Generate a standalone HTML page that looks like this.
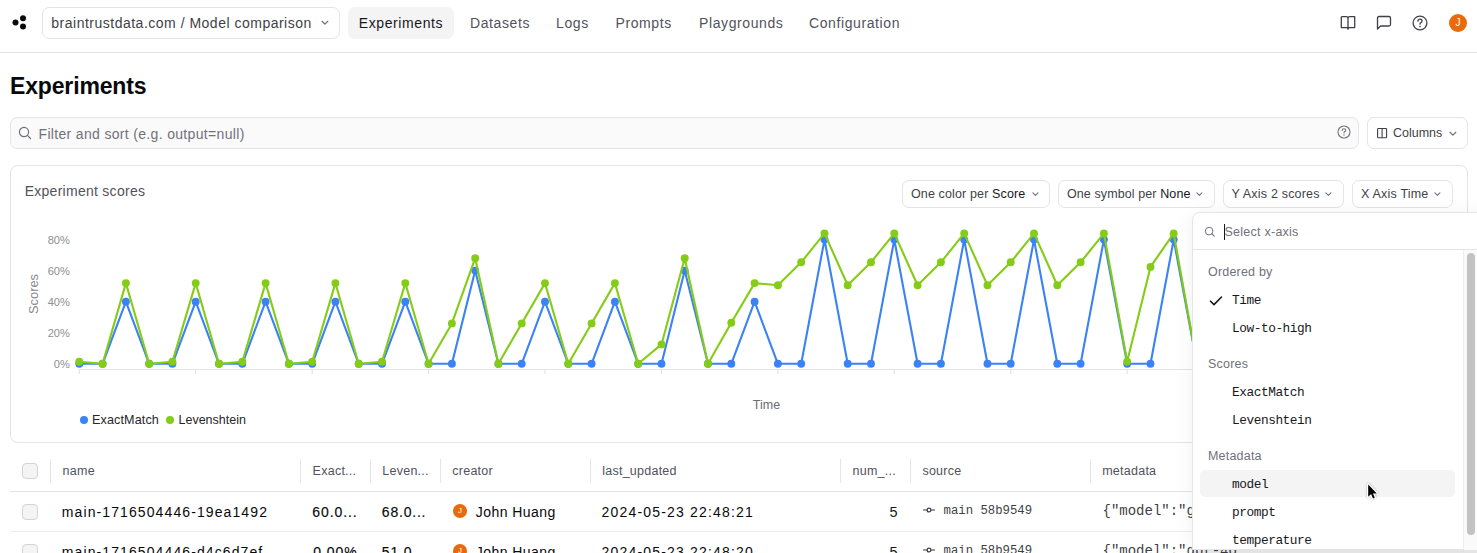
<!DOCTYPE html>
<html><head><meta charset="utf-8">
<style>
*{box-sizing:border-box;margin:0;padding:0}
html,body{width:1477px;height:553px;overflow:hidden;background:#fff}
body{font-family:"Liberation Sans",sans-serif;color:#18181b;position:relative}
.a{position:absolute;white-space:nowrap}
.hdr{position:absolute;left:0;top:0;width:1477px;height:53px;border-bottom:1px solid #e4e4e7}
.sel{position:absolute;left:42px;top:7px;width:298px;height:32px;border:1px solid #e4e4e7;border-radius:7px}
.tab{position:absolute;top:7px;height:32px;line-height:32px;font-size:14px;color:#52525b;letter-spacing:0.6px}
.tab.on{background:#f4f4f5;border-radius:7px;color:#18181b}
.ico{position:absolute}
.btn{position:absolute;border:1px solid #e4e4e7;border-radius:7px;background:#fff}
.chev{position:absolute}
.mono{font-family:"Liberation Mono",monospace}
</style></head><body>

<!-- header -->
<div class="hdr"></div>
<svg class="ico" style="left:10px;top:13px" width="18" height="18" viewBox="0 0 18 18">
  <circle cx="5.5" cy="9.5" r="3" fill="#0a0a0a"/>
  <circle cx="13" cy="5.2" r="3" fill="#0a0a0a"/>
  <circle cx="13" cy="13.6" r="3" fill="#0a0a0a"/>
</svg>
<div class="sel"></div>
<div class="a" style="left:51.3px;top:13px;font-size:14px;line-height:20px;color:#3f3f46;letter-spacing:0.5px">braintrustdata.com / Model comparison</div>
<svg class="chev" style="left:321px;top:20px" width="8" height="5" viewBox="0 0 8 5"><path d="M1 1.3 L3.9 4.1 L6.8 1.3" fill="none" stroke="#71717a" stroke-width="1.25" stroke-linecap="round" stroke-linejoin="round"/></svg>

<div class="tab on" style="left:348px;width:106px;text-align:center">Experiments</div>
<div class="tab" style="left:470px">Datasets</div>
<div class="tab" style="left:556px">Logs</div>
<div class="tab" style="left:615.5px">Prompts</div>
<div class="tab" style="left:699px">Playgrounds</div>
<div class="tab" style="left:809px">Configuration</div>

<!-- right icons -->
<svg class="ico" style="left:1340px;top:15px" width="16" height="16" viewBox="0 0 16 16">
  <path d="M1.3 1.7 H6.3 Q8 1.7 8 3.4 V14.6 M8 3.4 Q8 1.7 9.7 1.7 H14.7 V12.6 H9.6 Q8 12.6 8 14.2 Q8 12.6 6.4 12.6 H1.3 V1.7" fill="none" stroke="#3f3f46" stroke-width="1.3" stroke-linejoin="round"/>
</svg>
<svg class="ico" style="left:1376px;top:15px" width="16" height="16" viewBox="0 0 16 16">
  <path d="M1.5 14 V3 Q1.5 1.5 3 1.5 H13 Q14.5 1.5 14.5 3 V9.5 Q14.5 11 13 11 H4.5 Z" fill="none" stroke="#3f3f46" stroke-width="1.3" stroke-linejoin="round"/>
</svg>
<svg class="ico" style="left:1412px;top:15px" width="16" height="16" viewBox="0 0 16 16">
  <circle cx="8" cy="8" r="6.9" fill="none" stroke="#3f3f46" stroke-width="1.3"/>
  <path d="M5.9 6.2 Q6 4.2 8 4.2 Q10 4.2 10 6 Q10 7.2 8.6 7.8 Q8 8.1 8 9.2" fill="none" stroke="#3f3f46" stroke-width="1.3" stroke-linecap="round"/>
  <circle cx="8" cy="11.6" r="0.8" fill="#3f3f46"/>
</svg>
<div class="a" style="left:1449px;top:14px;width:18px;height:18px;border-radius:50%;background:#ea6a0a;color:#fff;font-size:10px;line-height:18px;text-align:center">J</div>

<!-- title -->
<div class="a" style="left:10px;top:72px;font-size:23px;line-height:28px;font-weight:700;color:#09090b;letter-spacing:-0.15px">Experiments</div>

<!-- search -->
<div class="btn" style="left:10px;top:117px;width:1349px;height:32px;background:#fafafa;border-color:#e4e4e7"></div>
<svg class="ico" style="left:18px;top:126px" width="14" height="14" viewBox="0 0 14 14">
  <circle cx="6" cy="6" r="4.6" fill="none" stroke="#71717a" stroke-width="1.2"/>
  <path d="M9.4 9.4 L12.5 12.5" stroke="#71717a" stroke-width="1.2" stroke-linecap="round"/>
</svg>
<div class="a" style="left:38.5px;top:124px;font-size:14px;line-height:20px;color:#71717a;letter-spacing:0.33px">Filter and sort (e.g. output=null)</div>
<svg class="ico" style="left:1337px;top:125px" width="14" height="14" viewBox="0 0 14 14">
  <circle cx="7" cy="7" r="6" fill="none" stroke="#71717a" stroke-width="1.1"/>
  <path d="M5.2 5.5 Q5.3 3.8 7 3.8 Q8.7 3.8 8.7 5.3 Q8.7 6.3 7.5 6.8 Q7 7.1 7 8" fill="none" stroke="#71717a" stroke-width="1.1" stroke-linecap="round"/>
  <circle cx="7" cy="10" r="0.7" fill="#71717a"/>
</svg>

<!-- columns button -->
<div class="btn" style="left:1367px;top:117px;width:101px;height:32px"></div>
<svg class="ico" style="left:1376px;top:127px" width="12" height="12" viewBox="0 0 12 12">
  <rect x="1.6" y="1.5" width="9" height="9.3" rx="0.8" fill="none" stroke="#3f3f46" stroke-width="1.1"/>
  <path d="M6.1 1.5 V10.8" stroke="#3f3f46" stroke-width="1.1"/>
</svg>
<div class="a" style="left:1393px;top:123px;font-size:12.5px;line-height:20px;color:#3f3f46">Columns</div>
<svg class="chev" style="left:1449px;top:131px" width="8" height="5" viewBox="0 0 8 5"><path d="M1 1.3 L3.9 4.1 L6.8 1.3" fill="none" stroke="#71717a" stroke-width="1.25" stroke-linecap="round" stroke-linejoin="round"/></svg>

<!-- card -->
<div class="a" style="left:10px;top:165px;width:1458px;height:278px;border:1px solid #e4e4e7;border-radius:8px"></div>
<div class="a" style="left:24.7px;top:181px;font-size:14px;line-height:20px;color:#52525b;letter-spacing:0.27px">Experiment scores</div>

<div class="btn" style="left:902px;top:180px;width:148px;height:28px"></div>
<div class="a" style="left:911px;top:186px;font-size:12.5px;line-height:16px;color:#3f3f46;letter-spacing:0.13px">One color per <span style="color:#18181b">Score</span></div>
<svg class="chev" style="left:1032px;top:190.6px" width="7" height="6" viewBox="0 0 8 5"><path d="M1 1.3 L3.9 4.1 L6.8 1.3" fill="none" stroke="#71717a" stroke-width="1.25" stroke-linecap="round" stroke-linejoin="round"/></svg>

<div class="btn" style="left:1058px;top:180px;width:157px;height:28px"></div>
<div class="a" style="left:1067px;top:186px;font-size:12.5px;line-height:16px;color:#3f3f46;letter-spacing:0.1px">One symbol per <span style="color:#18181b">None</span></div>
<svg class="chev" style="left:1196px;top:190.6px" width="7" height="6" viewBox="0 0 8 5"><path d="M1 1.3 L3.9 4.1 L6.8 1.3" fill="none" stroke="#71717a" stroke-width="1.25" stroke-linecap="round" stroke-linejoin="round"/></svg>

<div class="btn" style="left:1223px;top:180px;width:121px;height:28px"></div>
<div class="a" style="left:1231.5px;top:186px;font-size:12.5px;line-height:16px;color:#3f3f46;letter-spacing:0.2px">Y Axis 2 scores</div>
<svg class="chev" style="left:1325px;top:190.6px" width="7" height="6" viewBox="0 0 8 5"><path d="M1 1.3 L3.9 4.1 L6.8 1.3" fill="none" stroke="#71717a" stroke-width="1.25" stroke-linecap="round" stroke-linejoin="round"/></svg>

<div class="btn" style="left:1352px;top:180px;width:101px;height:28px"></div>
<div class="a" style="left:1361px;top:186px;font-size:12.5px;line-height:16px;color:#3f3f46;letter-spacing:0.2px">X Axis Time</div>
<svg class="chev" style="left:1434px;top:190.6px" width="7" height="6" viewBox="0 0 8 5"><path d="M1 1.3 L3.9 4.1 L6.8 1.3" fill="none" stroke="#71717a" stroke-width="1.25" stroke-linecap="round" stroke-linejoin="round"/></svg>

<!-- CHART -->
<svg id="chart" class="a" style="left:0;top:0" width="1477" height="553" viewBox="0 0 1477 553">
<g id="chartg">
<text x="69.9" y="367.8" text-anchor="end" font-size="11.1" fill="#8e8e93" font-family="Liberation Sans">0%</text>
<text x="69.9" y="336.8" text-anchor="end" font-size="11.1" fill="#8e8e93" font-family="Liberation Sans">20%</text>
<text x="69.9" y="305.7" text-anchor="end" font-size="11.1" fill="#8e8e93" font-family="Liberation Sans">40%</text>
<text x="69.9" y="274.6" text-anchor="end" font-size="11.1" fill="#8e8e93" font-family="Liberation Sans">60%</text>
<text x="69.9" y="243.6" text-anchor="end" font-size="11.1" fill="#8e8e93" font-family="Liberation Sans">80%</text>
<text transform="translate(37.9,294) rotate(-90)" text-anchor="middle" font-size="12.9" fill="#8a8a8f" font-family="Liberation Sans">Scores</text>
<path d="M79.3 369.5 H1200" stroke="#e4e4e7" stroke-width="1.2" fill="none"/>
<path d="M79.3 369.5 V374" stroke="#e4e4e7" stroke-width="1.2"/>
<path d="M195.7 369.5 V374" stroke="#e4e4e7" stroke-width="1.2"/>
<path d="M312.2 369.5 V374" stroke="#e4e4e7" stroke-width="1.2"/>
<path d="M428.6 369.5 V374" stroke="#e4e4e7" stroke-width="1.2"/>
<path d="M545.0 369.5 V374" stroke="#e4e4e7" stroke-width="1.2"/>
<path d="M661.5 369.5 V374" stroke="#e4e4e7" stroke-width="1.2"/>
<path d="M777.9 369.5 V374" stroke="#e4e4e7" stroke-width="1.2"/>
<path d="M894.3 369.5 V374" stroke="#e4e4e7" stroke-width="1.2"/>
<path d="M1010.7 369.5 V374" stroke="#e4e4e7" stroke-width="1.2"/>
<path d="M1127.2 369.5 V374" stroke="#e4e4e7" stroke-width="1.2"/>
<path d="M1243.6 369.5 V374" stroke="#e4e4e7" stroke-width="1.2"/>
<polyline points="79.3,363.8 102.6,363.8 125.9,301.7 149.2,363.8 172.4,363.8 195.7,301.7 219.0,363.8 242.3,363.8 265.6,301.7 288.9,363.8 312.2,363.8 335.4,301.7 358.7,363.8 382.0,363.8 405.3,301.7 428.6,363.8 451.9,363.8 475.2,270.6 498.4,363.8 521.7,363.8 545.0,301.7 568.3,363.8 591.6,363.8 614.9,301.7 638.2,363.8 661.5,363.8 684.7,270.6 708.0,363.8 731.3,363.8 754.6,301.7 777.9,363.8 801.2,363.8 824.5,239.6 847.7,363.8 871.0,363.8 894.3,239.6 917.6,363.8 940.9,363.8 964.2,239.6 987.5,363.8 1010.7,363.8 1034.0,239.6 1057.3,363.8 1080.6,363.8 1103.9,239.6 1127.2,363.8 1150.5,363.8 1173.7,239.6 1197.0,363.8 1220.3,363.8 1243.6,301.7" fill="none" stroke="#3b82f6" stroke-width="2.1" stroke-linejoin="round"/>
<circle cx="79.3" cy="363.8" r="3.95" fill="#3b82f6"/><circle cx="102.6" cy="363.8" r="3.95" fill="#3b82f6"/><circle cx="125.9" cy="301.7" r="3.95" fill="#3b82f6"/><circle cx="149.2" cy="363.8" r="3.95" fill="#3b82f6"/><circle cx="172.4" cy="363.8" r="3.95" fill="#3b82f6"/><circle cx="195.7" cy="301.7" r="3.95" fill="#3b82f6"/><circle cx="219.0" cy="363.8" r="3.95" fill="#3b82f6"/><circle cx="242.3" cy="363.8" r="3.95" fill="#3b82f6"/><circle cx="265.6" cy="301.7" r="3.95" fill="#3b82f6"/><circle cx="288.9" cy="363.8" r="3.95" fill="#3b82f6"/><circle cx="312.2" cy="363.8" r="3.95" fill="#3b82f6"/><circle cx="335.4" cy="301.7" r="3.95" fill="#3b82f6"/><circle cx="358.7" cy="363.8" r="3.95" fill="#3b82f6"/><circle cx="382.0" cy="363.8" r="3.95" fill="#3b82f6"/><circle cx="405.3" cy="301.7" r="3.95" fill="#3b82f6"/><circle cx="428.6" cy="363.8" r="3.95" fill="#3b82f6"/><circle cx="451.9" cy="363.8" r="3.95" fill="#3b82f6"/><circle cx="475.2" cy="270.6" r="3.95" fill="#3b82f6"/><circle cx="498.4" cy="363.8" r="3.95" fill="#3b82f6"/><circle cx="521.7" cy="363.8" r="3.95" fill="#3b82f6"/><circle cx="545.0" cy="301.7" r="3.95" fill="#3b82f6"/><circle cx="568.3" cy="363.8" r="3.95" fill="#3b82f6"/><circle cx="591.6" cy="363.8" r="3.95" fill="#3b82f6"/><circle cx="614.9" cy="301.7" r="3.95" fill="#3b82f6"/><circle cx="638.2" cy="363.8" r="3.95" fill="#3b82f6"/><circle cx="661.5" cy="363.8" r="3.95" fill="#3b82f6"/><circle cx="684.7" cy="270.6" r="3.95" fill="#3b82f6"/><circle cx="708.0" cy="363.8" r="3.95" fill="#3b82f6"/><circle cx="731.3" cy="363.8" r="3.95" fill="#3b82f6"/><circle cx="754.6" cy="301.7" r="3.95" fill="#3b82f6"/><circle cx="777.9" cy="363.8" r="3.95" fill="#3b82f6"/><circle cx="801.2" cy="363.8" r="3.95" fill="#3b82f6"/><circle cx="824.5" cy="239.6" r="3.95" fill="#3b82f6"/><circle cx="847.7" cy="363.8" r="3.95" fill="#3b82f6"/><circle cx="871.0" cy="363.8" r="3.95" fill="#3b82f6"/><circle cx="894.3" cy="239.6" r="3.95" fill="#3b82f6"/><circle cx="917.6" cy="363.8" r="3.95" fill="#3b82f6"/><circle cx="940.9" cy="363.8" r="3.95" fill="#3b82f6"/><circle cx="964.2" cy="239.6" r="3.95" fill="#3b82f6"/><circle cx="987.5" cy="363.8" r="3.95" fill="#3b82f6"/><circle cx="1010.7" cy="363.8" r="3.95" fill="#3b82f6"/><circle cx="1034.0" cy="239.6" r="3.95" fill="#3b82f6"/><circle cx="1057.3" cy="363.8" r="3.95" fill="#3b82f6"/><circle cx="1080.6" cy="363.8" r="3.95" fill="#3b82f6"/><circle cx="1103.9" cy="239.6" r="3.95" fill="#3b82f6"/><circle cx="1127.2" cy="363.8" r="3.95" fill="#3b82f6"/><circle cx="1150.5" cy="363.8" r="3.95" fill="#3b82f6"/><circle cx="1173.7" cy="239.6" r="3.95" fill="#3b82f6"/><circle cx="1197.0" cy="363.8" r="3.95" fill="#3b82f6"/><circle cx="1220.3" cy="363.8" r="3.95" fill="#3b82f6"/><circle cx="1243.6" cy="301.7" r="3.95" fill="#3b82f6"/>
<polyline points="79.3,361.8 102.6,363.8 125.9,283.1 149.2,363.8 172.4,361.8 195.7,283.1 219.0,363.8 242.3,361.8 265.6,283.1 288.9,363.8 312.2,361.8 335.4,283.1 358.7,363.8 382.0,361.8 405.3,283.1 428.6,363.8 451.9,323.4 475.2,258.2 498.4,363.8 521.7,323.4 545.0,283.1 568.3,363.8 591.6,323.4 614.9,283.1 638.2,363.8 661.5,344.4 684.7,258.2 708.0,363.8 731.3,322.7 754.6,283.1 777.9,285.2 801.2,262.3 824.5,233.4 847.7,285.2 871.0,262.3 894.3,233.4 917.6,285.2 940.9,262.3 964.2,233.4 987.5,285.2 1010.7,262.3 1034.0,233.4 1057.3,285.2 1080.6,262.3 1103.9,233.4 1127.2,361.6 1150.5,266.9 1173.7,233.4 1197.0,363.8 1220.3,323.4 1243.6,283.1" fill="none" stroke="#84cc16" stroke-width="2.1" stroke-linejoin="round"/>
<circle cx="79.3" cy="361.8" r="3.95" fill="#84cc16"/><circle cx="102.6" cy="363.8" r="3.95" fill="#84cc16"/><circle cx="125.9" cy="283.1" r="3.95" fill="#84cc16"/><circle cx="149.2" cy="363.8" r="3.95" fill="#84cc16"/><circle cx="172.4" cy="361.8" r="3.95" fill="#84cc16"/><circle cx="195.7" cy="283.1" r="3.95" fill="#84cc16"/><circle cx="219.0" cy="363.8" r="3.95" fill="#84cc16"/><circle cx="242.3" cy="361.8" r="3.95" fill="#84cc16"/><circle cx="265.6" cy="283.1" r="3.95" fill="#84cc16"/><circle cx="288.9" cy="363.8" r="3.95" fill="#84cc16"/><circle cx="312.2" cy="361.8" r="3.95" fill="#84cc16"/><circle cx="335.4" cy="283.1" r="3.95" fill="#84cc16"/><circle cx="358.7" cy="363.8" r="3.95" fill="#84cc16"/><circle cx="382.0" cy="361.8" r="3.95" fill="#84cc16"/><circle cx="405.3" cy="283.1" r="3.95" fill="#84cc16"/><circle cx="428.6" cy="363.8" r="3.95" fill="#84cc16"/><circle cx="451.9" cy="323.4" r="3.95" fill="#84cc16"/><circle cx="475.2" cy="258.2" r="3.95" fill="#84cc16"/><circle cx="498.4" cy="363.8" r="3.95" fill="#84cc16"/><circle cx="521.7" cy="323.4" r="3.95" fill="#84cc16"/><circle cx="545.0" cy="283.1" r="3.95" fill="#84cc16"/><circle cx="568.3" cy="363.8" r="3.95" fill="#84cc16"/><circle cx="591.6" cy="323.4" r="3.95" fill="#84cc16"/><circle cx="614.9" cy="283.1" r="3.95" fill="#84cc16"/><circle cx="638.2" cy="363.8" r="3.95" fill="#84cc16"/><circle cx="661.5" cy="344.4" r="3.95" fill="#84cc16"/><circle cx="684.7" cy="258.2" r="3.95" fill="#84cc16"/><circle cx="708.0" cy="363.8" r="3.95" fill="#84cc16"/><circle cx="731.3" cy="322.7" r="3.95" fill="#84cc16"/><circle cx="754.6" cy="283.1" r="3.95" fill="#84cc16"/><circle cx="777.9" cy="285.2" r="3.95" fill="#84cc16"/><circle cx="801.2" cy="262.3" r="3.95" fill="#84cc16"/><circle cx="824.5" cy="233.4" r="3.95" fill="#84cc16"/><circle cx="847.7" cy="285.2" r="3.95" fill="#84cc16"/><circle cx="871.0" cy="262.3" r="3.95" fill="#84cc16"/><circle cx="894.3" cy="233.4" r="3.95" fill="#84cc16"/><circle cx="917.6" cy="285.2" r="3.95" fill="#84cc16"/><circle cx="940.9" cy="262.3" r="3.95" fill="#84cc16"/><circle cx="964.2" cy="233.4" r="3.95" fill="#84cc16"/><circle cx="987.5" cy="285.2" r="3.95" fill="#84cc16"/><circle cx="1010.7" cy="262.3" r="3.95" fill="#84cc16"/><circle cx="1034.0" cy="233.4" r="3.95" fill="#84cc16"/><circle cx="1057.3" cy="285.2" r="3.95" fill="#84cc16"/><circle cx="1080.6" cy="262.3" r="3.95" fill="#84cc16"/><circle cx="1103.9" cy="233.4" r="3.95" fill="#84cc16"/><circle cx="1127.2" cy="361.6" r="3.95" fill="#84cc16"/><circle cx="1150.5" cy="266.9" r="3.95" fill="#84cc16"/><circle cx="1173.7" cy="233.4" r="3.95" fill="#84cc16"/><circle cx="1197.0" cy="363.8" r="3.95" fill="#84cc16"/><circle cx="1220.3" cy="323.4" r="3.95" fill="#84cc16"/><circle cx="1243.6" cy="283.1" r="3.95" fill="#84cc16"/>
<text x="766.5" y="408.8" text-anchor="middle" font-size="12.5" fill="#6b6b70" font-family="Liberation Sans">Time</text>
<circle cx="84" cy="420" r="4" fill="#3b82f6"/><text x="92" y="424" font-size="12.6" letter-spacing="0.12" fill="#27272a" font-family="Liberation Sans">ExactMatch</text>
<circle cx="170" cy="420" r="4" fill="#84cc16"/><text x="178.5" y="424" font-size="12.5" fill="#27272a" font-family="Liberation Sans">Levenshtein</text>
</g>
</svg>

<!-- TABLE -->
<div id="table">
<div class="a" style="left:22px;top:463px;width:16px;height:16px;border:1px solid #d4d4d8;border-radius:4px;background:#f4f4f5"></div>
<div class="a" style="left:50.2px;top:459px;width:1px;height:24px;background:#e4e4e7"></div>
<div class="a" style="left:300.2px;top:459px;width:1px;height:24px;background:#e4e4e7"></div>
<div class="a" style="left:370.0px;top:459px;width:1px;height:24px;background:#e4e4e7"></div>
<div class="a" style="left:439.9px;top:459px;width:1px;height:24px;background:#e4e4e7"></div>
<div class="a" style="left:590.3px;top:459px;width:1px;height:24px;background:#e4e4e7"></div>
<div class="a" style="left:840.0px;top:459px;width:1px;height:24px;background:#e4e4e7"></div>
<div class="a" style="left:909.9px;top:459px;width:1px;height:24px;background:#e4e4e7"></div>
<div class="a" style="left:1090.0px;top:459px;width:1px;height:24px;background:#e4e4e7"></div>
<div class="a" style="left:62.6px;top:462.6px;font-size:12.5px;line-height:17px;color:#52525b;letter-spacing:0.25px">name</div>
<div class="a" style="left:312.6px;top:462.6px;font-size:12.5px;line-height:17px;color:#52525b;letter-spacing:0.25px">Exact...</div>
<div class="a" style="left:382.3px;top:462.6px;font-size:12.5px;line-height:17px;color:#52525b;letter-spacing:0.25px">Leven...</div>
<div class="a" style="left:452.3px;top:462.6px;font-size:12.5px;line-height:17px;color:#52525b;letter-spacing:0.25px">creator</div>
<div class="a" style="left:602.2px;top:462.6px;font-size:12.5px;line-height:17px;color:#52525b;letter-spacing:0.25px">last_updated</div>
<div class="a" style="left:852.5px;top:462.6px;font-size:12.5px;line-height:17px;color:#52525b;letter-spacing:0.25px">num_...</div>
<div class="a" style="left:922.4px;top:462.6px;font-size:12.5px;line-height:17px;color:#52525b;letter-spacing:0.25px">source</div>
<div class="a" style="left:1102.2px;top:462.6px;font-size:12.5px;line-height:17px;color:#52525b;letter-spacing:0.25px">metadata</div>
<div class="a" style="left:10px;top:491px;width:1467px;height:1px;background:#e4e4e7"></div>
<div class="a" style="left:10px;top:531px;width:1467px;height:1px;background:#ececee"></div>
<div class="a" style="left:22px;top:503.5px;width:16px;height:16px;border:1px solid #d4d4d8;border-radius:4px;background:#f4f4f5"></div>
<div class="a" style="left:61.8px;top:501.5px;font-size:14px;line-height:20px;color:#09090b;letter-spacing:1.1px">main-1716504446-19ea1492</div>
<div class="a" style="left:300px;width:57.5px;text-align:right;top:501.5px;font-size:14px;line-height:20px;color:#09090b;letter-spacing:0.9px;-webkit-text-stroke:0.15px #09090b">60.0...</div>
<div class="a" style="left:381.8px;top:501.5px;font-size:14px;line-height:20px;color:#09090b;letter-spacing:0.8px;-webkit-text-stroke:0.15px #09090b">68.0...</div>
<div class="a" style="left:453px;top:504.0px;width:14px;height:14px;border-radius:50%;background:#ea6a0a;color:#fff;font-size:8px;line-height:14px;text-align:center">J</div>
<div class="a" style="left:475.8px;top:501.5px;font-size:14px;line-height:20px;color:#09090b;letter-spacing:0.45px">John Huang</div>
<div class="a" style="left:601.6px;top:501.5px;font-size:14px;line-height:20px;color:#09090b;letter-spacing:1.18px">2024-05-23 22:48:21</div>
<div class="a" style="left:889.5px;top:501.5px;font-size:14.5px;line-height:20px;color:#18181b">5</div>
<svg class="a" style="left:922px;top:504.8px" width="14" height="10" viewBox="0 0 14 10"><circle cx="7" cy="5" r="1.9" fill="none" stroke="#3f3f46" stroke-width="1.3"/><path d="M1 5 H5 M9 5 H13" stroke="#3f3f46" stroke-width="1.2"/></svg>
<div class="a mono" style="left:943.5px;top:502.5px;font-size:12.3px;line-height:16px;color:#3f3f46">main 58b9549</div>
<div class="a mono" style="left:1102.5px;top:501.0px;font-size:14px;line-height:20px;color:#3f3f46;width:135px;overflow:hidden">{"model":"gpt-4o"</div>
<div class="a" style="left:22px;top:543.5px;width:16px;height:16px;border:1px solid #d4d4d8;border-radius:4px;background:#f4f4f5"></div>
<div class="a" style="left:61.8px;top:541.5px;font-size:14px;line-height:20px;color:#09090b;letter-spacing:1.1px">main-1716504446-d4c6d7ef</div>
<div class="a" style="left:300px;width:57.5px;text-align:right;top:541.5px;font-size:14px;line-height:20px;color:#09090b;letter-spacing:0.9px;-webkit-text-stroke:0.15px #09090b">0.00%</div>
<div class="a" style="left:381.8px;top:541.5px;font-size:14px;line-height:20px;color:#09090b;letter-spacing:0.8px;-webkit-text-stroke:0.15px #09090b">51.0...</div>
<div class="a" style="left:453px;top:544.0px;width:14px;height:14px;border-radius:50%;background:#ea6a0a;color:#fff;font-size:8px;line-height:14px;text-align:center">J</div>
<div class="a" style="left:475.8px;top:541.5px;font-size:14px;line-height:20px;color:#09090b;letter-spacing:0.45px">John Huang</div>
<div class="a" style="left:601.6px;top:541.5px;font-size:14px;line-height:20px;color:#09090b;letter-spacing:1.18px">2024-05-23 22:48:20</div>
<div class="a" style="left:889.5px;top:541.5px;font-size:14.5px;line-height:20px;color:#18181b">5</div>
<svg class="a" style="left:922px;top:544.8px" width="14" height="10" viewBox="0 0 14 10"><circle cx="7" cy="5" r="1.9" fill="none" stroke="#3f3f46" stroke-width="1.3"/><path d="M1 5 H5 M9 5 H13" stroke="#3f3f46" stroke-width="1.2"/></svg>
<div class="a mono" style="left:943.5px;top:542.5px;font-size:12.3px;line-height:16px;color:#3f3f46">main 58b9549</div>
<div class="a mono" style="left:1102.5px;top:541.0px;font-size:14px;line-height:20px;color:#3f3f46;width:135px;overflow:hidden">{"model":"gpt-4o-mini"</div>
</div><!--/table-->

<!-- DROPDOWN -->
<div id="dd">
<div class="a" style="left:1192px;top:212px;width:300px;height:338px;background:#fff;border:1px solid #e5e5e5;border-radius:8px 8px 0 0;box-shadow:0 2px 20px rgba(0,0,0,0.06)"></div>
<svg class="a" style="left:1204px;top:226px" width="12" height="12" viewBox="0 0 12 12"><circle cx="5.1" cy="5.1" r="3.8" fill="none" stroke="#71717a" stroke-width="1"/><path d="M7.9 7.9 L10.2 10.2" stroke="#71717a" stroke-width="1.1" stroke-linecap="round"/></svg>
<div class="a" style="left:1224px;top:224px;width:1.2px;height:16px;background:#18181b"></div>
<div class="a" style="left:1224.5px;top:223.8px;font-size:12.5px;line-height:17px;color:#71717a;letter-spacing:0.25px">Select x-axis</div>
<div class="a" style="left:1193px;top:249px;width:284px;height:1px;background:#e4e4e7"></div>
<div class="a" style="left:1463px;top:250px;width:1px;height:301px;background:#ededed"></div>
<div class="a" style="left:1464px;top:250px;width:13px;height:301px;background:#fafafa"></div>
<div class="a" style="left:1466.5px;top:253px;width:8px;height:281.5px;border-radius:4px;background:#c2c2c2"></div>
<div class="a" style="left:1192px;top:550px;width:285px;height:3px;background:rgba(0,0,0,0.08)"></div>
<div class="a" style="left:1208px;top:264.1px;font-size:12.5px;line-height:17px;color:#71717a;letter-spacing:0.2px">Ordered by</div>
<div class="a" style="left:1208px;top:355.9px;font-size:12.5px;line-height:17px;color:#71717a;letter-spacing:0.2px">Scores</div>
<div class="a" style="left:1208px;top:448.2px;font-size:12.5px;line-height:17px;color:#71717a;letter-spacing:0.2px">Metadata</div>
<div class="a" style="left:1200px;top:470.3px;width:255px;height:27px;border-radius:5px;background:#f4f4f5"></div>
<div class="a mono" style="left:1232px;top:292.9px;font-size:12.8px;line-height:16px;color:#18181b;letter-spacing:-0.45px">Time</div>
<div class="a mono" style="left:1232px;top:321.3px;font-size:12.8px;line-height:16px;color:#18181b;letter-spacing:-0.45px">Low-to-high</div>
<div class="a mono" style="left:1232px;top:384.7px;font-size:12.8px;line-height:16px;color:#18181b;letter-spacing:-0.45px">ExactMatch</div>
<div class="a mono" style="left:1232px;top:413.0px;font-size:12.8px;line-height:16px;color:#18181b;letter-spacing:-0.45px">Levenshtein</div>
<div class="a mono" style="left:1232px;top:477.4px;font-size:12.8px;line-height:16px;color:#18181b;letter-spacing:-0.45px">model</div>
<div class="a mono" style="left:1232px;top:505.4px;font-size:12.8px;line-height:16px;color:#18181b;letter-spacing:-0.45px">prompt</div>
<div class="a mono" style="left:1232px;top:532.8px;font-size:12.8px;line-height:16px;color:#18181b;letter-spacing:-0.45px">temperature</div>
<svg class="a" style="left:1209px;top:294.5px" width="14" height="12" viewBox="0 0 14 12"><path d="M1.5 6.2 L5 9.6 L12.5 2" fill="none" stroke="#18181b" stroke-width="1.6" stroke-linecap="round" stroke-linejoin="round"/></svg>
<svg class="a" style="left:1366px;top:482px;overflow:visible" width="14" height="19" viewBox="0 0 14 19"><g transform="translate(2.2,2.5)"><path d="M0 0 V12.2 L2.9 9.5 L4.8 14 L6.6 13.2 L4.8 8.9 L8.6 8.9 Z" fill="#fff" stroke="#fff" stroke-width="2.4" stroke-linejoin="round" style="filter:drop-shadow(0 0.6px 0.8px rgba(0,0,0,0.3))"/><path d="M0 0 V12.2 L2.9 9.5 L4.8 14 L6.6 13.2 L4.8 8.9 L8.6 8.9 Z" fill="#000"/></g></svg>
</div><!--/dd-->

</body></html>
